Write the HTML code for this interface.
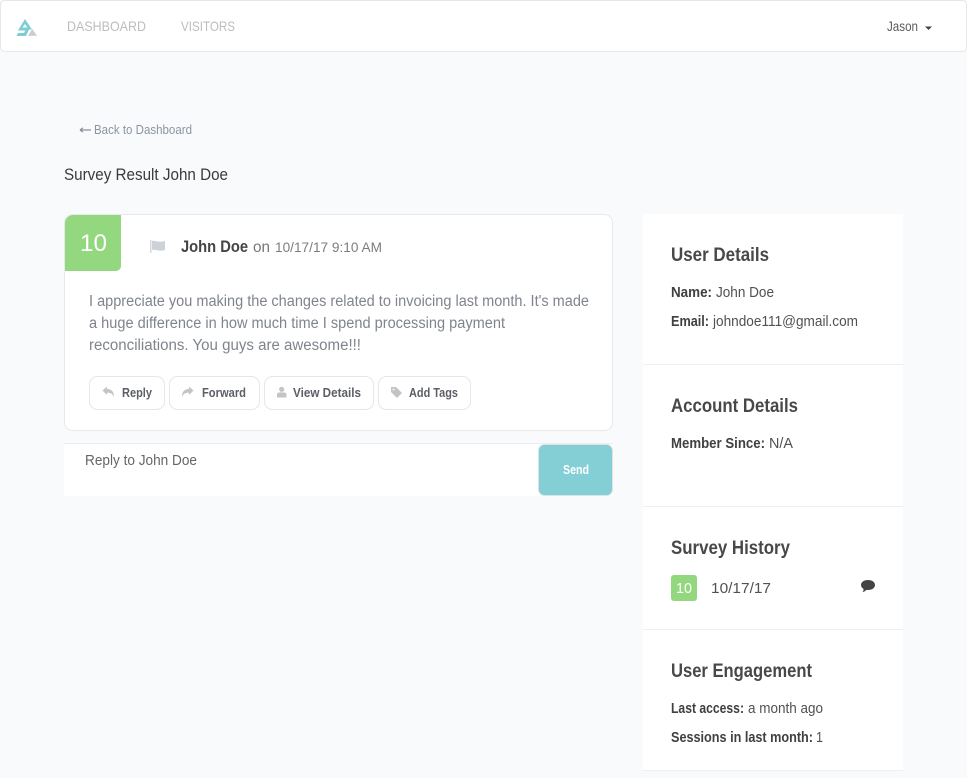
<!DOCTYPE html>
<html><head><meta charset="utf-8"><style>
html,body{margin:0;padding:0;background:#f9fafc;width:967px;height:778px;overflow:hidden}
svg{position:absolute;left:0;top:0;display:block}
text{font-family:"Liberation Sans",sans-serif;white-space:pre}
.h{font-weight:bold;font-size:19px;fill:#484848}
.t{font-size:14.5px;fill:#515151}
.l{font-weight:bold;font-size:14.5px;fill:#404040}
.p{font-size:15.5px;fill:#7f848d}
.btn{font-weight:bold;font-size:13px;fill:#5c5f66}
.bx{fill:#fff;stroke:#e6e6ea}
</style></head><body>
<svg width="967" height="778" viewBox="0 0 967 778" xmlns="http://www.w3.org/2000/svg">
<rect width="967" height="778" fill="#f9fafc"/>
<!-- nav -->
<rect x="0.5" y="0.5" width="966" height="51" rx="4" fill="#fff" stroke="#e7e7e7"/>
<path d="M25 19 L32 29.5 L28.5 29.5 L25 24 L22.5 27.5 H30 L26 36 H16.5 L18 33 H24 L25.2 30.5 H18 Z" fill="#7fcdd3"/>
<path d="M32.3 29 L37 35.8 H27.8 Z" fill="#c9ccd3"/>
<text x="67" y="31" font-size="14" fill="#bdbdbd" textLength="79" lengthAdjust="spacingAndGlyphs">DASHBOARD</text>
<text x="181" y="31" font-size="14" fill="#bdbdbd" textLength="54" lengthAdjust="spacingAndGlyphs">VISITORS</text>
<text x="887" y="31" font-size="14" fill="#5c5c5c" textLength="31" lengthAdjust="spacingAndGlyphs">Jason</text>
<path d="M925 26.5 H932 L928.5 30 Z" fill="#444"/>
<!-- back -->
<path d="M80 130 H91 M80 130 L83 127.8 M80 130 L83 132.2" stroke="#8a8f98" stroke-width="1.2" fill="none"/>
<text x="94" y="134" font-size="13" fill="#8c94a3" textLength="98" lengthAdjust="spacingAndGlyphs">Back to Dashboard</text>
<text x="64" y="180" font-size="17" fill="#3a3a3a" textLength="164" lengthAdjust="spacingAndGlyphs">Survey Result John Doe</text>
<!-- card -->
<rect x="64.5" y="214.5" width="548" height="216" rx="8" fill="#fff" stroke="#e8e9ee"/>
<path d="M73 215 H121 V266 A5 5 0 0 1 116 271 H65 V223 A8 8 0 0 1 73 215 Z" fill="#93d87f"/>
<text x="80" y="251" font-size="24" fill="#fff" textLength="27" lengthAdjust="spacingAndGlyphs">10</text>
<path d="M150 240 H151.5 V253 H150 Z" fill="#d6dade"/>
<path d="M152 241 C155 240 158 243 165 241 V250 C159 252 156 249 152 250 Z" fill="#cdd2d8"/>
<text x="181" y="252" font-size="17" font-weight="bold" fill="#444" textLength="67" lengthAdjust="spacingAndGlyphs">John Doe</text>
<text x="253" y="252" font-size="16" fill="#777" textLength="17" lengthAdjust="spacingAndGlyphs">on</text>
<text x="275" y="252" font-size="14" fill="#7d7d7d" textLength="107" lengthAdjust="spacingAndGlyphs">10/17/17 9:10 AM</text>
<text x="89" y="306" class="p" textLength="500" lengthAdjust="spacingAndGlyphs">I appreciate you making the changes related to invoicing last month. It's made</text>
<text x="89" y="328" class="p" textLength="416" lengthAdjust="spacingAndGlyphs">a huge difference in how much time I spend processing payment</text>
<text x="89" y="350" class="p" textLength="272" lengthAdjust="spacingAndGlyphs">reconciliations. You guys are awesome!!!</text>
<!-- buttons -->
<rect class="bx" x="89.5" y="376.5" width="75" height="33" rx="8"/>
<rect class="bx" x="169.5" y="376.5" width="90" height="33" rx="8"/>
<rect class="bx" x="264.5" y="376.5" width="109" height="33" rx="8"/>
<rect class="bx" x="378.5" y="376.5" width="92" height="33" rx="8"/>
<path d="M102.5 390.5 L107 386.5 V389 C111.5 389 114 391.5 114 397 C112.5 393.5 110.5 392.8 107 392.8 V395 Z" fill="#c4c4c4"/>
<path d="M193.5 390.5 L189 386.5 V389 C184.5 389 182 391.5 182 397 C183.5 393.5 185.5 392.8 189 392.8 V395 Z" fill="#c4c4c4"/>
<circle cx="281.7" cy="389.3" r="2.6" fill="#c4c4c4"/><path d="M277 397.5 V394.5 C277 392.8 278.5 392.4 281.7 392.4 C285 392.4 286.5 392.8 286.5 394.5 V397.5 Z" fill="#c4c4c4"/>
<path d="M391 387 H396 L402 393 L397 398 L391 392 Z" fill="#c4c4c4"/><circle cx="393.5" cy="389.5" r="0.9" fill="#fff"/>
<text x="122" y="397" class="btn" textLength="30" lengthAdjust="spacingAndGlyphs">Reply</text>
<text x="202" y="397" class="btn" textLength="44" lengthAdjust="spacingAndGlyphs">Forward</text>
<text x="293" y="397" class="btn" textLength="68" lengthAdjust="spacingAndGlyphs">View Details</text>
<text x="409" y="397" class="btn" textLength="49" lengthAdjust="spacingAndGlyphs">Add Tags</text>
<!-- reply -->
<rect x="64" y="443" width="549" height="53" fill="#fff"/>
<rect x="64" y="443" width="549" height="1" fill="#eceef0"/>
<rect x="538.5" y="444.5" width="74" height="51" rx="6" fill="#84cfd6" stroke="#dfe3e6"/>
<text x="85" y="465" font-size="14.5" fill="#666" textLength="112" lengthAdjust="spacingAndGlyphs">Reply to John Doe</text>
<text x="563" y="474" font-size="13" font-weight="bold" fill="#fff" textLength="26" lengthAdjust="spacingAndGlyphs">Send</text>
<!-- sidebar -->
<rect x="643" y="214" width="260" height="557" fill="#fff"/>
<rect x="643" y="364" width="260" height="1" fill="#eeeff1"/>
<rect x="643" y="506" width="260" height="1" fill="#eeeff1"/>
<rect x="643" y="629" width="260" height="1" fill="#eeeff1"/>
<rect x="643" y="770" width="260" height="1" fill="#eeeff1"/>
<text x="671" y="261" class="h" textLength="98" lengthAdjust="spacingAndGlyphs">User Details</text>
<text x="671" y="297" class="l" textLength="41" lengthAdjust="spacingAndGlyphs">Name:</text>
<text x="716" y="297" class="t" textLength="58" lengthAdjust="spacingAndGlyphs">John Doe</text>
<text x="671" y="326" class="l" textLength="38" lengthAdjust="spacingAndGlyphs">Email:</text>
<text x="713" y="326" class="t" textLength="145" lengthAdjust="spacingAndGlyphs">johndoe111@gmail.com</text>
<text x="671" y="412" class="h" textLength="127" lengthAdjust="spacingAndGlyphs">Account Details</text>
<text x="671" y="448" class="l" textLength="94" lengthAdjust="spacingAndGlyphs">Member Since:</text>
<text x="769" y="448" class="t" textLength="24" lengthAdjust="spacingAndGlyphs">N/A</text>
<text x="671" y="554" class="h" textLength="119" lengthAdjust="spacingAndGlyphs">Survey History</text>
<rect x="671" y="575" width="26" height="26" rx="3" fill="#93d87f"/>
<text x="676" y="593" font-size="15" fill="#fff" textLength="16" lengthAdjust="spacingAndGlyphs">10</text>
<text x="711" y="593" class="t" textLength="60" lengthAdjust="spacingAndGlyphs">10/17/17</text>
<path d="M868 580 C872 580 875 582 875 585 C875 588 872 590 868 590 C867.3 590 866.8 590 866.3 589.9 C865.5 591 864 592 862.5 592 C863.3 591 863.6 590 863.6 589 C862 588 861 586.6 861 585 C861 582 864 580 868 580 Z" fill="#444"/>
<text x="671" y="677" class="h" textLength="141" lengthAdjust="spacingAndGlyphs">User Engagement</text>
<text x="671" y="713" class="l" textLength="73" lengthAdjust="spacingAndGlyphs">Last access:</text>
<text x="748" y="713" class="t" textLength="75" lengthAdjust="spacingAndGlyphs">a month ago</text>
<text x="671" y="742" class="l" textLength="142" lengthAdjust="spacingAndGlyphs">Sessions in last month:</text>
<text x="816" y="742" class="t" textLength="7" lengthAdjust="spacingAndGlyphs">1</text>
</svg>
</body></html>
